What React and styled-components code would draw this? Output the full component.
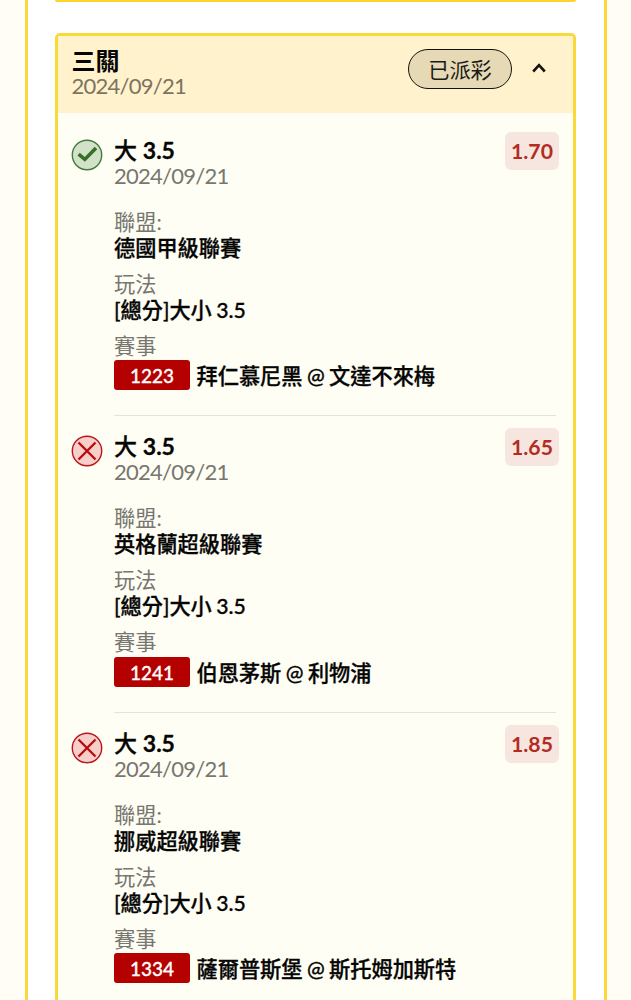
import React from 'react';
import styled, { createGlobalStyle } from 'styled-components';

const GlobalStyle = createGlobalStyle`
  * {
    box-sizing: border-box;
  }

  body {
    margin: 0;
    background: #fffdf5;
    color: #050504;
    font-family: Lato, "Noto Sans CJK TC", sans-serif;
    font-size: 21.2px;
  }
`;

const Page = styled.div`
  height: 1000px;
  padding: 0 24px 0 24.5px;
  overflow: hidden;
`;

const Panel = styled.div`
  height: 1000px;
  padding: 0 28px 0 27.5px;
  border: solid #fbd63c;
  border-width: 0 3px;
  background: #fff;
  overflow: hidden;
`;

const PreviousCard = styled.div`
  height: 2px;
  border-bottom: 2px solid #fbd42f;
  border-radius: 0 0 5px 5px;
`;

const Card = styled.div`
  height: 1100px;
  margin-top: 31px;
  border: 3px solid #f9d83a;
  border-radius: 5px;
  background: #fffef4;
  overflow: hidden;
`;

const Header = styled.div`
  display: flex;
  align-items: flex-start;
  height: 77px;
  padding: 13px 25px 0 14px;
  background: #fff2cc;
`;

const Heading = styled.div`
  flex: 1;
  margin: -1.5px 0 0 -0.5px;
`;

const Title = styled.div`
  height: ${props => (props.$large ? '25px' : '26px')};
  font-size: ${props => (props.$large ? '24px' : '23px')};
  font-weight: ${props => (props.$large ? 700 : 500)};
  line-height: ${props => (props.$large ? '25px' : '26px')};
  white-space: nowrap;
  -webkit-text-stroke: ${props => (props.$large ? '0' : '0.3px')};

  b {
    font-weight: 700;
  }
`;

const PlayDate = styled.div`
  height: 25px;
  color: ${props => props.color};
  font-size: 22px;
  letter-spacing: -0.75px;
  line-height: 25px;
`;

const Status = styled.div`
  width: 104px;
  height: 40px;
  margin-right: 18px;
  padding-top: 1px;
  border: 1.6px solid #12110c;
  border-radius: 20px;
  background: #e5dab5;
  color: #1c1a14;
  line-height: 38px;
  text-align: center;
`;

const Legs = styled.div`
  padding: 5.9px 14px 0 13px;
`;

const Leg = styled.div`
  display: flex;
  height: 296.5px;
`;

const ResultIcon = styled.svg`
  flex: none;
  width: 32px;
  height: 32px;
  margin: 19.7px 11px 0 0;
`;

const LegBody = styled.div`
  flex: 1;
  height: 297.5px;
  margin-right: 3px;
  padding-top: 18px;
  border-bottom: 1.5px solid #e5e3dd;
`;

const LegTop = styled.div`
  display: flex;
  justify-content: space-between;
  height: 72px;
`;

const Odds = styled.div`
  width: 54px;
  height: 38px;
  margin: -5px -3px 0 0;
  border-radius: 6px;
  background: #f7e6df;
  color: #b32c24;
  font-weight: 700;
  line-height: 39px;
  text-align: center;
`;

const Field = styled.div`
  margin-bottom: 10px;
`;

const Label = styled.div`
  height: 26px;
  color: #777670;
  line-height: 26px;
`;

const Value = styled.div`
  display: flex;
  align-items: center;
  height: 26px;
  font-weight: 500;
  line-height: 26px;
  white-space: nowrap;
  word-spacing: -0.9px;
  -webkit-text-stroke: 0.3px;
`;

const MatchValue = styled(Value)`
  height: 30px;
  margin-top: 1.6px;
`;

const MatchNumber = styled.span`
  width: 76px;
  height: 30px;
  margin-right: 6.5px;
  border-radius: 3px;
  background: #b50000;
  color: #fff;
  font-size: 19px;
  line-height: 31px;
  text-align: center;
`;

const MatchName = styled.span`
  padding-top: 2px;
`;

const legs = [
  {
    won: true, odds: '1.70', league: '德國甲級聯賽', number: 1223, match: '拜仁慕尼黑 @ 文達不來梅',
  },
  {
    won: false, odds: '1.65', league: '英格蘭超級聯賽', number: 1241, match: '伯恩茅斯 @ 利物浦',
  },
  {
    won: false, odds: '1.85', league: '挪威超級聯賽', number: 1334, match: '薩爾普斯堡 @ 斯托姆加斯特',
  },
];

const Result = ({ won }) => (
  <ResultIcon viewBox="0 0 32 32" fill="none">
    <circle
      cx="16"
      cy="16"
      r="14.7"
      fill={won ? '#d2e2c8' : '#f6ceca'}
      stroke={won ? '#417b3b' : '#b9151b'}
      strokeWidth="1.4"
    />
    {won
      ? <path d="M7.6 15.2l6.2 5.2L25 9" stroke="#347126" strokeWidth="3.6" />
      : <path d="M7.5 7.5l17 17M24.5 7.5l-17 17" stroke="#b90c12" strokeWidth="2.4" />}
  </ResultIcon>
);

const BetLeg = ({ leg }) => (
  <Leg>
    <Result won={leg.won} />
    <LegBody>
      <LegTop>
        <div>
          <Title>大 <b>3.5</b></Title>
          <PlayDate color="#777670">2024/09/21</PlayDate>
        </div>
        <Odds>{leg.odds}</Odds>
      </LegTop>
      <Field>
        <Label>聯盟:</Label>
        <Value>{leg.league}</Value>
      </Field>
      <Field>
        <Label>玩法</Label>
        <Value>[總分]大小 3.5</Value>
      </Field>
      <Label>賽事</Label>
      <MatchValue>
        <MatchNumber>{leg.number}</MatchNumber>
        <MatchName>{leg.match}</MatchName>
      </MatchValue>
    </LegBody>
  </Leg>
);

const App = () => (
  <Page>
    <GlobalStyle />
    <Panel>
      <PreviousCard />
      <Card>
        <Header>
          <Heading>
            <Title $large>三關</Title>
            <PlayDate color="#7c7460">2024/09/21</PlayDate>
          </Heading>
          <Status>已派彩</Status>
          <svg width="18" height="40" viewBox="0 0 18 40" fill="none">
            <path d="M3.2 22.5L9 16.2l5.8 6.3" stroke="#14130d" strokeWidth="2.6" />
          </svg>
        </Header>
        <Legs>
          {legs.map(leg => <BetLeg key={leg.number} leg={leg} />)}
        </Legs>
      </Card>
    </Panel>
  </Page>
);

export default App;
